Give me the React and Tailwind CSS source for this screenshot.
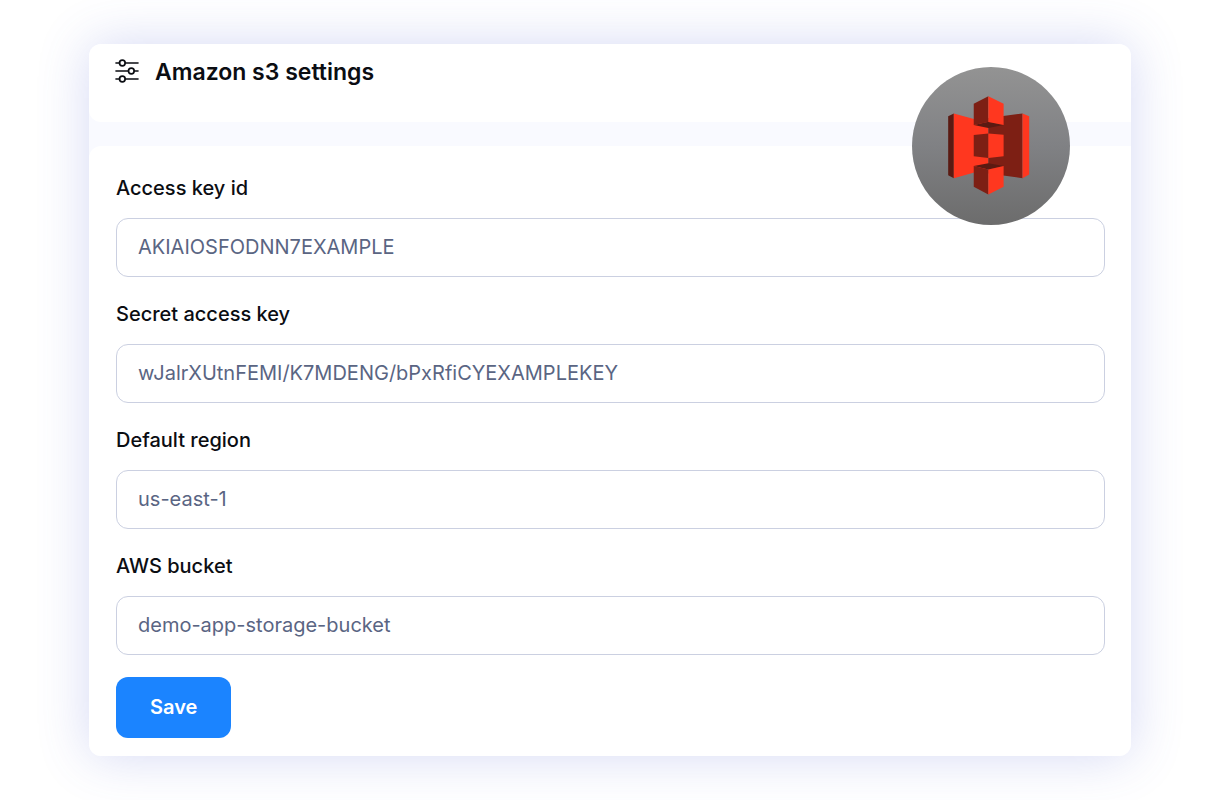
import React, { useState } from 'react';

const FIELDS = [
    { id: 'accessKeyId', label: 'Access key id', value: 'AKIAIOSFODNN7EXAMPLE' },
    { id: 'secretAccessKey', label: 'Secret access key', value: 'wJalrXUtnFEMI/K7MDENG/bPxRfiCYEXAMPLEKEY' },
    { id: 'defaultRegion', label: 'Default region', value: 'us-east-1' },
    { id: 'awsBucket', label: 'AWS bucket', value: 'demo-app-storage-bucket' },
];

const SlidersIcon = () => (
    <svg className="w-6 h-6 shrink-0" viewBox="0 0 72 72" fill="none" stroke="#0b0d12" strokeWidth="5" strokeLinecap="round" aria-hidden="true">
        <path d="M3 12H14M31 12H69M3 36H40M58 36H69M3 60H14M31 60H69" />
        <circle cx="22" cy="12" r="8.5" />
        <circle cx="49" cy="36" r="8.5" />
        <circle cx="22" cy="60" r="8.5" />
    </svg>
);

// Amazon S3 mark
const S3Logo = () => (
    <svg className="w-full h-full" viewBox="36 36 476 476" role="img" aria-label="Amazon S3">
        {/* side panels */}
        <path fill="#5b1a12" d="M145 184L162 176V371L145 362Z" />
        <path fill="#ff371f" d="M162 176L266 205V342L162 371Z" />
        <path fill="#7d1f14" d="M369 176L266 190V357L369 371Z" />
        <path fill="#ff371f" d="M369 176L389 184V360L369 371Z" />
        {/* middle cube */}
        <path fill="#7d1f14" d="M222 241L266 236V310L222 305Z" />
        <path fill="#ff371f" d="M266 236L312 240V305L266 310Z" />
        {/* top cube */}
        <path fill="#5b1a12" d="M222 211L266 201L312 211L266 220Z" />
        <path fill="#7d1f14" d="M222 147L266 124V202L222 211Z" />
        <path fill="#ff371f" d="M266 124L312 147V211L266 202Z" />
        {/* bottom cube */}
        <path fill="#5b1a12" d="M222 334L266 326L312 334L266 345Z" />
        <path fill="#7d1f14" d="M222 334L266 345V420L222 397Z" />
        <path fill="#ff371f" d="M266 345L312 334V397L266 420Z" />
    </svg>
);

const App = () => {
    const [values, setValues] = useState(
        Object.fromEntries(FIELDS.map((field) => [field.id, field.value]))
    );

    const handleChange = (e) => {
        const { name, value } = e.target;
        setValues(prev => ({ ...prev, [name]: value }));
    };

    return (
        <div className="min-h-screen bg-white px-[89px] py-11 font-['Inter',sans-serif] text-[#0b0d12]">
            <main className="relative rounded-xl bg-[#f9faff] shadow-[0_0_52px_rgba(80,95,210,0.24)]">
                <header className="flex items-start gap-4 rounded-l-xl rounded-tr-xl bg-white px-[26px] pt-3 pb-[34px]">
                    <div className="flex h-[30px] items-center">
                        <SlidersIcon />
                    </div>
                    <h1 className="text-[23px] leading-8 font-semibold">Amazon s3 settings</h1>
                </header>

                <form
                    className="mt-6 rounded-l-xl rounded-br-xl bg-white pr-[26px] pl-[27px] pt-[27px] pb-[18px]"
                    onSubmit={(e) => e.preventDefault()}
                >
                    {FIELDS.map((field) => (
                        <div key={field.id} className="mb-[22px]">
                            <label htmlFor={field.id} className="mb-[15px] block text-[20px] leading-[30px] font-medium">
                                {field.label}
                            </label>
                            <input
                                id={field.id}
                                name={field.id}
                                type="text"
                                value={values[field.id]}
                                onChange={handleChange}
                                className="block h-[59px] w-full rounded-xl border border-[#cbd0e1] bg-white px-[21px] pb-0.5 text-[20px] text-[#5a6583] outline-none focus:border-[#1b84ff]"
                            />
                        </div>
                    ))}
                    <button
                        type="submit"
                        className="block h-[61px] rounded-xl bg-[#1b84ff] px-[34px] pb-0.5 text-[20px] font-semibold text-white hover:bg-[#056ee9]"
                    >
                        Save
                    </button>
                </form>

                <div className="absolute top-[23px] right-[61px] h-[158px] w-[158px] rounded-full bg-linear-to-b from-[#939393] via-[#808184] to-[#6c6c6c]">
                    <S3Logo />
                </div>
            </main>
        </div>
    );
};

export default App;
